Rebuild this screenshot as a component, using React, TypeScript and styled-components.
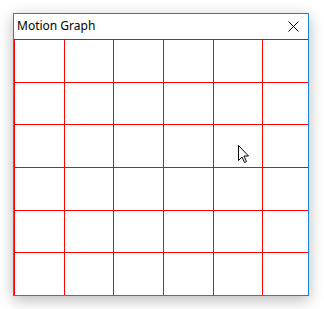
import React from "react";
import styled, { createGlobalStyle } from "styled-components";

const COLS = 6;
const ROWS = 6;
const GRID_W = 294;
const GRID_H = 256;
const STEP_X = 298 / COLS;
const STEP_Y = 256 / ROWS;

const Global = createGlobalStyle`
  html, body {
    margin: 0;
    padding: 0;
    background: #ffffff;
  }
  body {
    width: 324px;
    height: 309px;
    overflow: hidden;
  }
`;

const Desktop = styled.div`
  position: relative;
  width: 324px;
  height: 309px;
  padding: 13px 0 0 13px;
  box-sizing: border-box;
`;

const Window = styled.div`
  width: 296px;
  height: 283px;
  box-sizing: border-box;
  border: 1px solid #1883d7;
  background: #ffffff;
  display: flex;
  flex-direction: column;
  box-shadow: 0 4px 14px rgba(0, 0, 0, 0.28);
`;

const TitleBar = styled.div`
  height: 25px;
  display: flex;
  align-items: center;
  justify-content: space-between;
  padding: 0 9px 0 3px;
`;

const Title = styled.span`
  font-family: "Noto Sans", "Open Sans", sans-serif;
  font-size: 12px;
  color: #000000;
  line-height: 1;
  padding-bottom: 1px;
`;

const CloseButton = styled.div`
  width: 12px;
  height: 12px;
  display: flex;
  align-items: center;
  justify-content: center;
`;

const Canvas = styled.svg`
  display: block;
  flex: 1;
  shape-rendering: crispEdges;
`;

const Pointer = styled.svg`
  position: absolute;
  left: 237px;
  top: 144px;
`;

const Grid = () => {
  const xs = Array.from({ length: COLS }, (_, i) => Math.round(i * STEP_X) + 0.5);
  const ys = Array.from({ length: ROWS }, (_, i) => Math.round(i * STEP_Y) + 0.5);
  return (
    <Canvas width={GRID_W} height={GRID_H} viewBox={`0 0 ${GRID_W} ${GRID_H}`}>
      {xs.map((x) => (
        <line key={"v" + x} x1={x} y1={0} x2={x} y2={GRID_H} stroke="#ff0000" strokeWidth={1} />
      ))}
      {ys.map((y) => (
        <line key={"h" + y} x1={0} y1={y} x2={GRID_W} y2={y} stroke="#ff0000" strokeWidth={1} />
      ))}
    </Canvas>
  );
};

export default function App() {
  return (
    <>
      <Global />
      <Desktop>
        <Window>
          <TitleBar>
            <Title>Motion Graph</Title>
            <CloseButton>
              <svg width="11" height="11" viewBox="0 0 11 11">
                <path d="M0.5 0.5 L10.5 10.5 M10.5 0.5 L0.5 10.5" stroke="#000" strokeWidth="1" />
              </svg>
            </CloseButton>
          </TitleBar>
          <Grid />
        </Window>
        <Pointer width="13" height="20" viewBox="0 0 13 20">
          <path
            d="M1.5 1.5 L1.5 16.5 L5 13 L7.5 18.5 L9.5 17.5 L7 12 L11.5 12 Z"
            fill="#ffffff"
            stroke="#000000"
            strokeWidth="1"
            strokeLinejoin="miter"
          />
        </Pointer>
      </Desktop>
    </>
  );
}
